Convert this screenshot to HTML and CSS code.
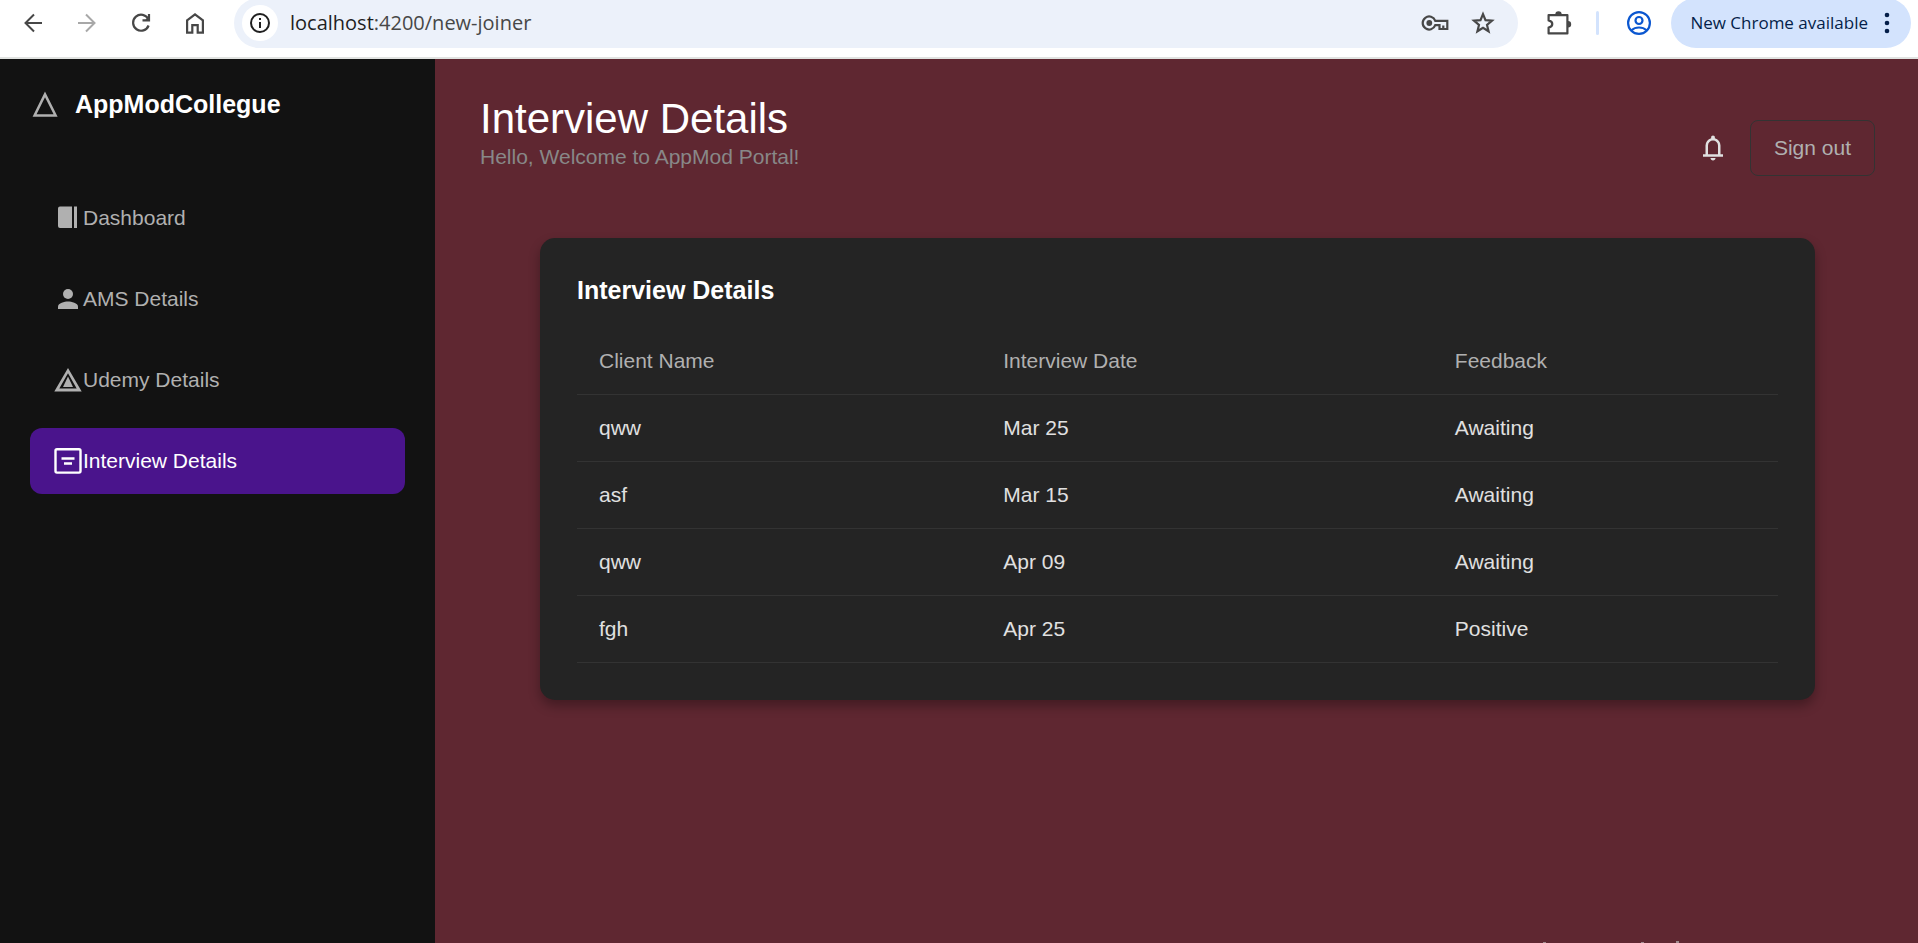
FILE: index.html
```html
<!DOCTYPE html>
<html lang="en">
<head>
<meta charset="utf-8">
<title>AppModCollegue</title>
<link rel="stylesheet" href="styles.css">
</head>
<body>
<header class="browser">
  <nav class="browser-nav" aria-label="Browser">
    <button class="tool" type="button" aria-label="Back"><svg width="24" height="24" viewBox="0 0 24 24" fill="none" stroke="#474747" stroke-width="2"><path d="M21 12H5M13 3.500L4.500 12l8.500 8.500"/></svg></button>
    <button class="tool" type="button" aria-label="Forward"><svg width="24" height="24" viewBox="0 0 24 24" fill="none" stroke="#a8a8a8" stroke-width="2"><path d="M3 12h16M11 3.500l8.500 8.500-8.500 8.500"/></svg></button>
    <button class="tool" type="button" aria-label="Reload"><svg width="24" height="24" viewBox="0 0 24 24" fill="none" stroke="#474747" stroke-width="2.200"><path d="M19.300 8.200A8 8 0 1 0 19.600 14.500"/><path d="M20 3v6.300h-6.500"/><path d="M20 5.500v3.800h-4z" fill="#474747" stroke="none"/></svg></button>
    <button class="tool" type="button" aria-label="Home"><svg width="24" height="24" viewBox="0 0 24 24" fill="none" stroke="#474747" stroke-width="2.200"><path d="M4.100 9.300L12 3.300l7.900 6v12.300h-5.200v-7.500H9.300v7.500H4.100z"/></svg></button>
  </nav>
  <div class="omnibox">
    <button class="site-info" type="button" aria-label="Site information"><svg width="24" height="24" viewBox="0 0 24 24" fill="none" stroke="#1f1f1f" stroke-width="2"><circle cx="12" cy="12" r="9"/><path d="M12 11v6M12 7v2"/></svg></button>
    <p class="url"><span class="host">localhost</span>:4200/new-joiner</p>
    <button class="tool" type="button" aria-label="Passwords"><svg width="28" height="24" viewBox="0 0 28 24" fill="none" stroke="#474747" stroke-width="2.200"><path d="M14.300 9.800A6.500 6.500 0 1 0 14.300 14.200H18.500V18h7.800V9.800z"/><path d="M22.300 18v-3.500"/><circle cx="8.300" cy="12" r="2.900" fill="#474747" stroke="none"/></svg></button>
    <button class="tool" type="button" aria-label="Bookmark"><svg width="24" height="24" viewBox="0 0 24 24" fill="none" stroke="#474747" stroke-width="2.200"><path d="M12 3.200l2.500 6 6.500.5-5 4.200 1.600 6.400L12 16.900l-5.600 3.400L8 13.900 3 9.700l6.500-.5z"/></svg></button>
  </div>
  <button class="tool" type="button" aria-label="Extensions"><svg width="26" height="26" viewBox="0 0 26 26" fill="none" stroke="#474747" stroke-width="2.200" stroke-linejoin="round"><path d="M2.600 5.100H21.400V23.400H2.600V17.600C7.500 16.500 7.500 11.500 2.600 10.400z"/><path d="M9.300 4.500a3.200 3.200 0 0 1 6.400 0zM22 11a3.200 3.200 0 0 1 0 6.400z" fill="#474747" stroke="none"/></svg></button>
  <span class="divider"></span>
  <button class="tool" type="button" aria-label="Profile"><svg width="26" height="26" viewBox="0 0 26 26" fill="none" stroke="#0b57d0" stroke-width="2.200"><circle cx="13" cy="13" r="10.900"/><circle cx="13" cy="10.500" r="3.500"/><path d="M5.500 20.200C9.500 16.600 16.500 16.600 20.500 20.200"/></svg></button>
  <button class="update" type="button">New Chrome available <svg width="6" height="22" viewBox="0 0 6 22" fill="#041e49"><circle cx="3" cy="3" r="2.300"/><circle cx="3" cy="11" r="2.300"/><circle cx="3" cy="19" r="2.300"/></svg></button>
</header>
<div class="app">
  <aside class="sidebar">
    <div class="brand"><svg width="30" height="30" viewBox="0 0 30 30" fill="none" stroke="#b0b0b0" stroke-width="2.500"><path d="M15 5.400L25.600 26.500H4.600z"/></svg>AppModCollegue</div>
    <nav class="menu">
      <a class="item" href="#"><svg width="30" height="30" viewBox="0 0 30 30" fill="currentColor"><path d="M8 3.500h12V25H8a2 2 0 0 1-2-2V5.500a2 2 0 0 1 2-2zM22 3.500h3V25h-3z"/></svg>Dashboard</a>
      <a class="item" href="#"><svg width="30" height="30" viewBox="0 0 30 30" fill="currentColor"><circle cx="16" cy="10" r="5"/><path d="M6 25v-2.500c0-3.300 6.600-5 10-5s10 1.700 10 5V25z"/></svg>AMS Details</a>
      <a class="item" href="#"><svg width="30" height="30" viewBox="0 0 30 30" fill="currentColor"><path fill-rule="evenodd" d="M16 3l13.700 23.500H2.300zM16 8.300L7.300 23.500h17.400z"/><path d="M16 11.500l5 10.500H11z"/></svg>Udemy Details</a>
      <a class="item active" href="#" aria-current="page"><svg width="30" height="30" viewBox="0 0 30 30" fill="none" stroke="currentColor" stroke-width="2.400"><rect x="3.500" y="3.300" width="25" height="23.300" rx="1.500"/><path d="M9.500 12.500h13M12 17.500h8"/></svg>Interview Details</a>
    </nav>
  </aside>
  <main class="main">
    <div class="topbar">
      <div class="heading">
        <h1 class="title">Interview Details</h1>
        <p class="welcome">Hello, Welcome to AppMod Portal!</p>
      </div>
      <div class="actions">
        <button class="bell" type="button" aria-label="Notifications"><svg width="30" height="30" viewBox="0 0 24 24" fill="#e0e0e0"><path d="M4 19v-2h2v-7q0-2.075 1.250-3.687T10.500 4.200v-.7q0-.625.438-1.062T12 2t1.063.438T13.500 3.500v.7q2 .5 3.250 2.113T18 10v7h2v2zm8 3q-.825 0-1.412-.587T10 20h4q0 .825-.587 1.413T12 22m-4-5h8v-7q0-1.650-1.175-2.825T12 6 9.175 7.175 8 10z"/></svg></button>
        <button class="signout" type="button">Sign out</button>
      </div>
    </div>
    <section class="card">
      <h2 class="card-title">Interview Details</h2>
      <table class="table">
        <thead><tr><th>Client Name</th><th>Interview Date</th><th>Feedback</th></tr></thead>
        <tbody>
          <tr><td>qww</td><td>Mar 25</td><td>Awaiting</td></tr>
          <tr><td>asf</td><td>Mar 15</td><td>Awaiting</td></tr>
          <tr><td>qww</td><td>Apr 09</td><td>Awaiting</td></tr>
          <tr><td>fgh</td><td>Apr 25</td><td>Positive</td></tr>
        </tbody>
      </table>
    </section>
  </main>
</div>
<svg class="specks" width="136" height="2" viewBox="0 0 136 2" fill="#a08a8e" aria-hidden="true"><path d="M0 1h3v1H0zM98 1h3v1h-3zM133 0h3v2h-3z"/></svg>
</body>
</html>
```

FILE: styles.css
```css
* { box-sizing: border-box; }
body {
  margin: 0;
  min-height: 100vh;
  display: flex;
  flex-direction: column;
  font-family: "Liberation Sans", Arial, sans-serif;
  font-size: 21px;
  line-height: 24px;
}
h1, h2, p { margin: 0; }
button { font: inherit; border: 0; padding: 0; background: none; cursor: pointer; }
svg { display: block; flex: none; }

/* Browser toolbar */
.browser {
  display: flex;
  align-items: center;
  height: 59px;
  padding: 0 7px 11px 21px;
  overflow: hidden;
  background: #fff;
  border-bottom: 2px solid #e1e3e1;
  font-family: "Open Sans", "Noto Sans", sans-serif;
}
.browser-nav { display: flex; gap: 30px; }
.omnibox {
  display: flex;
  flex: 1;
  align-items: center;
  gap: 22px;
  height: 50px;
  margin: 0 28px 0 27px;
  padding: 0 23px 0 8px;
  border-radius: 25px;
  background: #ecf1fa;
}
.site-info {
  display: grid;
  place-items: center;
  width: 36px;
  height: 36px;
  border-radius: 50%;
  background: #fff;
}
.url { flex: 1; margin-left: -10px; font-size: 20px; color: #474747; }
.host { color: #1f1f1f; }
.divider { width: 3px; height: 24px; margin: 0 27px 0 24px; border-radius: 2px; background: #d3e3fd; }
.update {
  display: flex;
  align-items: center;
  gap: 16px;
  height: 50px;
  margin-left: 19px;
  padding: 0 21px 0 19px;
  border-radius: 25px;
  background: #d3e3fd;
  color: #041e49;
  font-size: 17px;
  white-space: nowrap;
}

/* App shell */
.app { flex: 1; display: flex; background: #5f2731; }
.sidebar { flex: none; width: 435px; padding: 30px; background: #121212; }
.brand {
  display: flex;
  align-items: center;
  gap: 15px;
  color: #fff;
  font-weight: bold;
  font-size: 25px;
  line-height: 30px;
}
.menu { display: flex; flex-direction: column; gap: 15px; margin-top: 66px; }
.item {
  display: flex;
  align-items: center;
  gap: 1px;
  height: 66px;
  padding: 0 22px;
  border-radius: 12px;
  color: #b0b0b0;
  text-decoration: none;
}
.item.active { background: #4a148c; color: #fff; }

/* Content */
.main { flex: 1; padding: 35px 43px 45px 45px; }
.topbar { display: flex; align-items: flex-end; justify-content: space-between; }
.heading { padding-bottom: 6px; }
.title { font-size: 42px; line-height: 50px; font-weight: normal; color: #fff; }
.welcome { line-height: 26px; color: #888; }
.actions { display: flex; align-items: center; gap: 22px; }
.signout {
  padding: 15px 23px;
  border: 1px solid #333;
  border-radius: 8px;
  color: #b0b0b0;
}
.card {
  margin: 62px 60px 0;
  padding: 37px;
  border-radius: 15px;
  background: #242424;
  box-shadow: 0 6px 12px rgba(0, 0, 0, 0.3);
}
.card-title { font-size: 25px; line-height: 30px; color: #fff; }
.table { width: 100%; margin-top: 23px; border-spacing: 0; text-align: left; color: #e0e0e0; }
th, td { padding: 21px 22px; border-bottom: 1px solid #333; font-weight: normal; }
th { color: #b0b0b0; }

.specks { position: fixed; right: 239px; bottom: 0; }
```
